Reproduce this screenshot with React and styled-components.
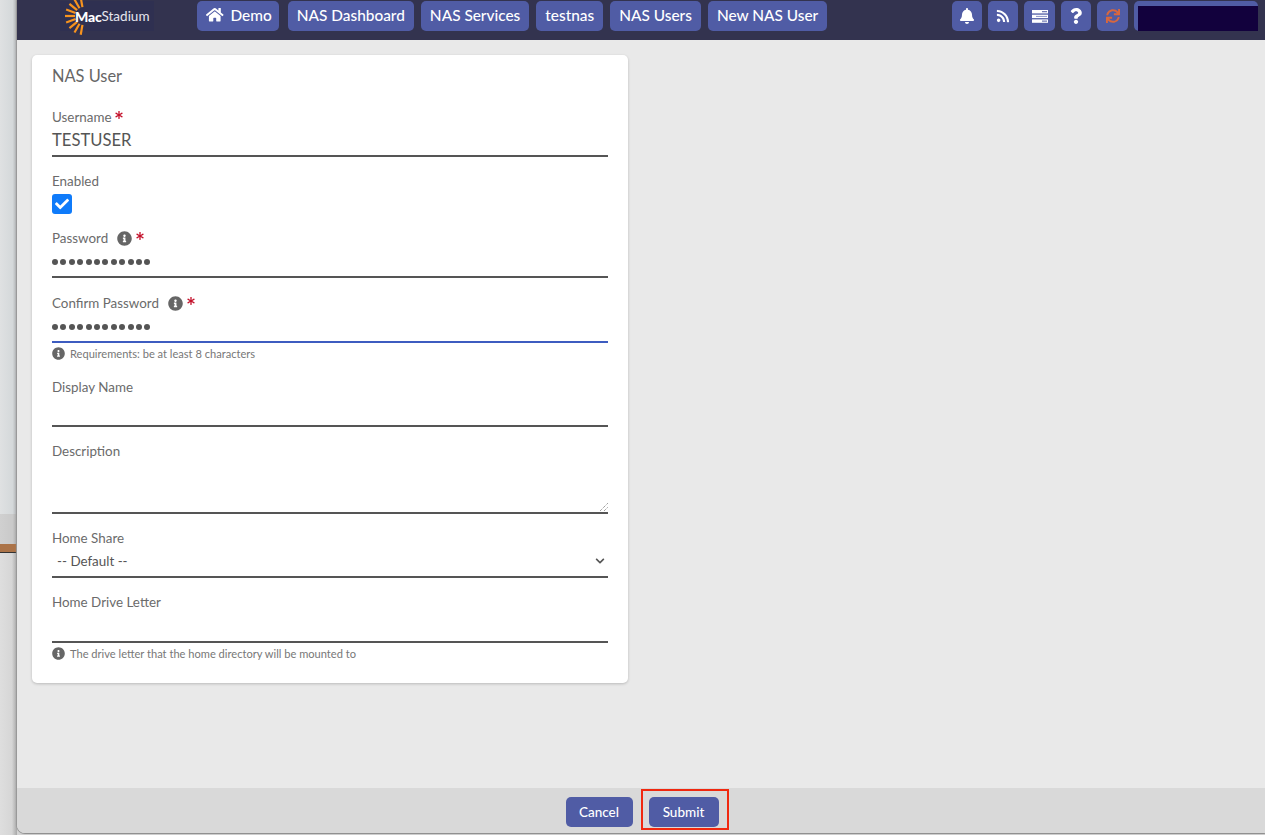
import React from 'react';
import styled, { createGlobalStyle } from 'styled-components';
import { FaHome, FaBell, FaRss, FaQuestion, FaInfoCircle, FaAsterisk, FaSync, FaCheck, FaChevronDown } from 'react-icons/fa';

const GlobalStyle = createGlobalStyle`
  html, body {
    margin: 0;
    padding: 0;
    height: 100%;
    overflow: hidden;
    background: #d4d4d4;
    font-family: "Lato", "Open Sans", sans-serif;
  }
  * {
    box-sizing: border-box;
  }
`;

const Desktop = styled.div`
  display: flex;
  width: 1265px;
  height: 835px;
  overflow: hidden;
`;

const Backdrop = styled.div`
  width: 17px;
  flex-shrink: 0;
  display: flex;
  flex-direction: column;
  background: linear-gradient(90deg, #dedede 0%, #d6d6d6 70%, #a8a8a8 100%);
`;

const BackdropTop = styled.div`
  height: 514px;
  background: linear-gradient(90deg, #dfe1e2 0%, #d4d8da 75%, #a9abad 100%);
`;

const BackdropGrey = styled.div`
  height: 30px;
  background: linear-gradient(90deg, #d0d0d0 0%, #c9c9c9 75%, #a6a6a6 100%);
`;

const BackdropShelf = styled.div`
  height: 9px;
  background: #ab7348;
  border-bottom: 1px solid #333;
`;

const AppWindow = styled.div`
  flex: 1;
  height: 833px;
  display: flex;
  flex-direction: column;
  background: #e9e9e9;
  border-bottom-left-radius: 8px;
  box-shadow: 0 1px 1px #8a8a8a, -1px 0 1px #9a9a9a;
  overflow: hidden;
`;

const TopBar = styled.header`
  height: 40px;
  flex-shrink: 0;
  display: flex;
  align-items: flex-start;
  background: #33334f;
  padding: 1px 7px 0 0;
`;

const LogoBox = styled.div`
  width: 180px;
  height: 30px;
  flex-shrink: 0;
  padding-left: 43px;
`;

const LogoPanel = styled.div`
  width: 94px;
  height: 30px;
  padding-left: 4px;
  display: flex;
  align-items: center;
  background: #2f3051;
`;

const LogoSun = styled.svg`
  flex-shrink: 0;
  margin-right: -9px;
  overflow: visible;
`;

const LogoMac = styled.span`
  color: #fff;
  font-size: 14px;
  font-weight: 900;
  letter-spacing: -0.2px;
`;

const LogoStadium = styled.span`
  color: #e6e6ee;
  font-size: 13.5px;
`;

const NavGroup = styled.nav`
  display: flex;
  gap: 7px;
`;

const NavButton = styled.button`
  height: 30px;
  padding: 0 ${props => props.$home ? '7px' : '9px'} 2px 9px;
  margin-right: ${props => props.$home ? '2px' : '0'};
  display: flex;
  align-items: center;
  gap: 7px;
  border: none;
  border-radius: 5px;
  background: #505ca5;
  color: #fff;
  font-family: inherit;
  font-size: 15.4px;
  font-weight: 500;
  white-space: nowrap;
`;

const IconGroup = styled.div`
  margin-left: auto;
  display: flex;
  gap: 6px;
`;

const IconButton = styled.button`
  width: ${props => props.$wide ? '31px' : '30px'};
  height: 30px;
  padding: 0;
  display: flex;
  align-items: center;
  justify-content: center;
  border: none;
  border-radius: 5px;
  background: #505ca5;
  color: ${props => props.$accent ? '#d9673e' : '#fff'};
  font-size: ${props => props.$size || 14}px;
`;

const UserBox = styled.div`
  width: 124px;
  height: 30px;
  padding: 5px 0 0 4px;
  border-radius: 5px 5px 0 5px;
  background: #505ca5;
`;

const RedactedName = styled.div`
  height: 25px;
  background: #12013d;
`;

const Content = styled.main`
  flex: 1;
  padding: 15px;
`;

const Card = styled.section`
  width: 596px;
  height: 628px;
  padding: 12px 20px 0;
  background: #fff;
  border-radius: 5px;
  box-shadow: 0 1px 3px rgba(0, 0, 0, 0.2);
  color: #666;
`;

const CardTitle = styled.h3`
  margin: 0 0 24px;
  height: 18px;
  line-height: 18px;
  font-size: 16.4px;
  font-weight: 400;
  color: #666;
`;

const Field = styled.div`
  margin-bottom: ${props => props.$gap || 16}px;
`;

const Label = styled.div`
  height: 16px;
  display: flex;
  align-items: center;
  font-size: 13.4px;
  line-height: 16px;
  color: #6b6b6b;
`;

const InfoIcon = styled(FaInfoCircle)`
  margin-left: 9px;
  font-size: 15px;
  color: #666;
`;

const Required = styled(FaAsterisk)`
  margin-left: 4px;
  margin-top: -5px;
  font-size: 8px;
  color: #c3102a;
`;

const TextValue = styled.div`
  height: ${props => props.$height || 32}px;
  padding-top: 4px;
  border-bottom: 2px solid #555;
  font-size: 16.6px;
  line-height: 22px;
  color: #555;
`;

const Dots = styled.div`
  height: 32px;
  padding-top: 13px;
  display: flex;
  gap: 2.4px;
  border-bottom: 2px solid ${props => props.$focused ? '#3d5cc0' : '#555'};
`;

const Dot = styled.span`
  width: 6px;
  height: 6px;
  border-radius: 50%;
  background: #555;
`;

const Checkbox = styled.div`
  width: 20px;
  height: 20px;
  margin-top: 5px;
  display: flex;
  align-items: center;
  justify-content: center;
  border-radius: 3px;
  background: #0f7bfa;
  color: #fff;
  font-size: 14px;
`;

const Hint = styled.div`
  height: 16px;
  margin-top: 2px;
  display: flex;
  align-items: center;
  gap: 5px;
  font-size: 11.1px;
  color: #777;
`;

const HintIcon = styled(FaInfoCircle)`
  font-size: 13px;
  color: #666;
`;

const TextAreaBox = styled.div`
  position: relative;
  height: 55px;
  border-bottom: 2px solid #555;
`;

const ResizeGrip = styled.svg`
  position: absolute;
  right: 0;
  bottom: 1px;
  width: 8px;
  height: 8px;
`;

const SelectBox = styled.div`
  height: 32px;
  padding: 0 3px 0 5px;
  display: flex;
  align-items: center;
  justify-content: space-between;
  border-bottom: 2px solid #555;
  font-size: 13.4px;
  color: #555;
`;

const Footer = styled.footer`
  height: 45px;
  flex-shrink: 0;
  display: flex;
  justify-content: center;
  gap: 16px;
  padding: 9px 0 0 2px;
  background: #d9d9d9;
`;

const ActionButton = styled.button`
  position: relative;
  width: ${props => props.$width}px;
  height: 30px;
  padding: 0 0 1px;
  border: none;
  border-radius: 5px;
  background: #505ca5;
  color: #fff;
  font-family: inherit;
  font-size: 13.5px;
  font-weight: 500;
`;

const Highlight = styled.span`
  position: absolute;
  top: -8px;
  left: -8px;
  right: -10px;
  bottom: -3px;
  border: 2px solid #f0280f;
  pointer-events: none;
`;

const navItems = ['NAS Dashboard', 'NAS Services', 'testnas', 'NAS Users', 'New NAS User'];

function PasswordDots({ focused }) {
  return (
    <Dots $focused={focused}>
      {Array.from({ length: 12 }).map((_, i) => <Dot key={i} />)}
    </Dots>
  );
}

function SunLogo() {
  const rays = [100, 120, 140, 160, 180, 200, 220, 240, 260];
  return (
    <LogoSun width="20" height="30" viewBox="0 0 20 30">
      {rays.map((a) => (
        <rect key={a} x="9" y="-1.1" width="10" height="2.2" fill="#f7931e"
          transform={`translate(20 15) rotate(${a})`} />
      ))}
    </LogoSun>
  );
}

function ServerIcon() {
  return (
    <svg width="16" height="13" viewBox="0 0 16 13">
      <rect y="0" width="16" height="3.4" fill="#fff" />
      <rect y="4.7" width="16" height="3.4" fill="#fff" />
      <rect y="9.4" width="16" height="3.4" fill="#fff" />
      <rect x="10" y="1.2" width="5" height="1" fill="#505ca5" />
      <rect x="4" y="5.9" width="11" height="1" fill="#8d96c8" />
      <rect x="10" y="10.6" width="5" height="1" fill="#505ca5" />
    </svg>
  );
}

export default function App() {
  return (
    <Desktop>
      <GlobalStyle />
      <Backdrop>
        <BackdropTop />
        <BackdropGrey />
        <BackdropShelf />
      </Backdrop>
      <AppWindow>
        <TopBar>
          <LogoBox>
            <LogoPanel>
              <SunLogo />
              <LogoMac>Mac</LogoMac>
              <LogoStadium>Stadium</LogoStadium>
            </LogoPanel>
          </LogoBox>
          <NavGroup>
            <NavButton $home><FaHome size={17.5} />Demo</NavButton>
            {navItems.map((item) => <NavButton key={item}>{item}</NavButton>)}
          </NavGroup>
          <IconGroup>
            <IconButton $size={16}><FaBell /></IconButton>
            <IconButton><FaRss /></IconButton>
            <IconButton $wide><ServerIcon /></IconButton>
            <IconButton $size={16}><FaQuestion /></IconButton>
            <IconButton $wide $accent><FaSync /></IconButton>
            <UserBox><RedactedName /></UserBox>
          </IconGroup>
        </TopBar>
        <Content>
          <Card>
            <CardTitle>NAS User</CardTitle>
            <Field>
              <Label>Username<Required /></Label>
              <TextValue>TESTUSER</TextValue>
            </Field>
            <Field>
              <Label>Enabled</Label>
              <Checkbox><FaCheck /></Checkbox>
            </Field>
            <Field $gap={17}>
              <Label>Password<InfoIcon /><Required /></Label>
              <PasswordDots />
            </Field>
            <Field $gap={18}>
              <Label>Confirm Password<InfoIcon /><Required /></Label>
              <PasswordDots focused />
              <Hint><HintIcon />Requirements: be at least 8 characters</Hint>
            </Field>
            <Field>
              <Label>Display Name</Label>
              <TextValue />
            </Field>
            <Field>
              <Label>Description</Label>
              <TextAreaBox>
                <ResizeGrip viewBox="0 0 8 8">
                  <path d="M0 8 L8 0 M4 8 L8 4" stroke="#777" strokeWidth="1" strokeDasharray="1 1" />
                </ResizeGrip>
              </TextAreaBox>
            </Field>
            <Field>
              <Label>Home Share</Label>
              <SelectBox>
                -- Default --
                <FaChevronDown size={10} />
              </SelectBox>
            </Field>
            <Field>
              <Label>Home Drive Letter</Label>
              <TextValue $height={33} />
              <Hint><HintIcon />The drive letter that the home directory will be mounted to</Hint>
            </Field>
          </Card>
        </Content>
        <Footer>
          <ActionButton $width={67}>Cancel</ActionButton>
          <ActionButton $width={70}>Submit<Highlight /></ActionButton>
        </Footer>
      </AppWindow>
    </Desktop>
  );
}
